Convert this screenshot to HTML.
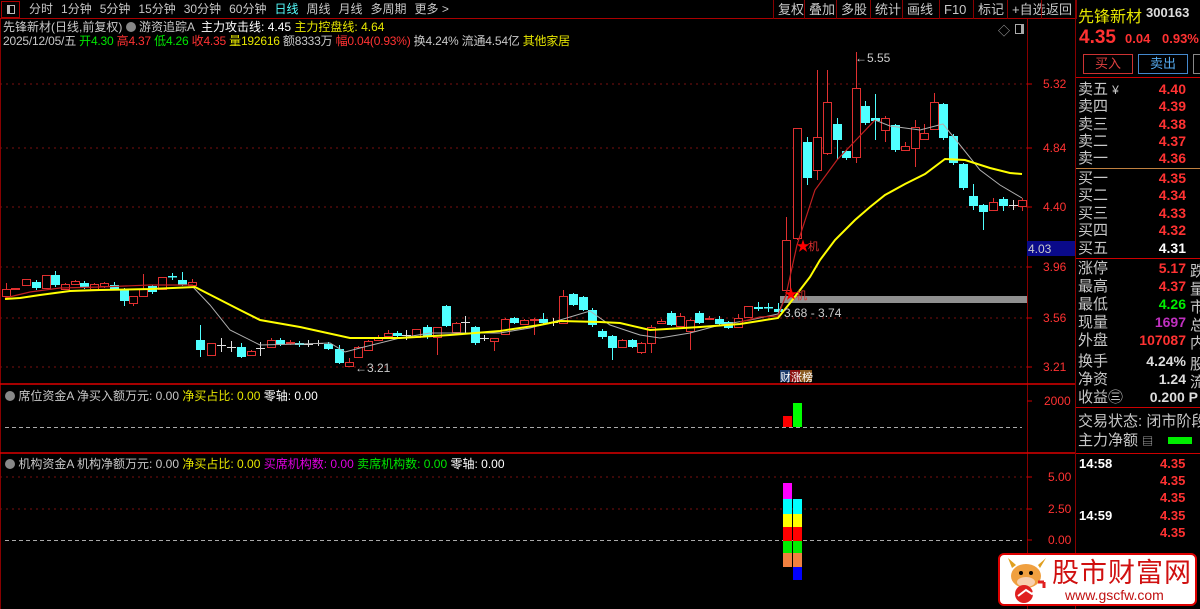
<!DOCTYPE html>
<html><head><meta charset="utf-8">
<style>
*{margin:0;padding:0;box-sizing:border-box}
body{width:1200px;height:609px;background:#000;overflow:hidden;position:relative;font-family:"Liberation Sans","Noto Sans CJK SC",sans-serif;color:#c8c8c8;font-size:12px}
.a{position:absolute;white-space:nowrap}
.menu span{margin-right:8px}
.btn{position:absolute;top:0;height:19px;border-left:1px solid #800;padding:0 4px;line-height:19px;font-size:13px;color:#c8c8c8}
.r{color:#ff3232}.g{color:#00e600}.y{color:#e6e600}.w{color:#fff}.m{color:#e000e0}
.lbl{position:absolute;left:1078px;font-size:15px;color:#c8c8c8;line-height:17px;white-space:nowrap}
.val{position:absolute;right:14px;font-size:14px;font-weight:bold;color:#ff3232;line-height:17px;text-align:right}
</style></head><body>
<!-- top bar -->
<div class="a" style="left:0;top:0;width:1075px;height:19px;border-bottom:1px solid #a00"></div>
<div class="a" style="left:1px;top:1px;width:19px;height:17px;border:1px solid #a00"></div>
<div class="a" style="left:7px;top:5px;width:8px;height:9px;border:1px solid #bbb;border-left-width:3px"></div>
<div class="a menu" style="left:29px;top:1px;font-size:12px;line-height:17px"><span>分时</span><span>1分钟</span><span>5分钟</span><span>15分钟</span><span>30分钟</span><span>60分钟</span><span style="color:#5ff">日线</span><span>周线</span><span>月线</span><span>多周期</span><span>更多 &gt;</span></div>
<div class="btn" style="left:773px">复权</div>
<div class="btn" style="left:804px">叠加</div>
<div class="btn" style="left:836px">多股</div>
<div class="btn" style="left:870px">统计</div>
<div class="btn" style="left:902px">画线</div>
<div class="btn" style="left:939px">F10</div>
<div class="btn" style="left:973px">标记</div>
<div class="btn" style="left:1007px">+自选</div>
<div class="btn" style="left:1041px;border-right:1px solid #800">返回</div>
<!-- info lines -->
<div class="a" style="left:3px;top:19px;font-size:12px;line-height:16px">先锋新材(日线,前复权) <span style="display:inline-block;width:10px;height:10px;border-radius:5px;background:#888;vertical-align:-1px"></span> 游资追踪A &nbsp;<span class="w">主力攻击线: 4.45</span> <span class="y">主力控盘线: 4.64</span></div>
<div class="a" style="left:3px;top:34px;font-size:12px;line-height:15px;letter-spacing:-0.2px">2025/12/05/五 <span class="g">开4.30</span> <span class="r">高4.37</span> <span class="g">低4.26</span> <span class="r">收4.35</span> <span class="y">量192616</span> 额8333万 <span class="r">幅0.04(0.93%)</span> 换4.24% 流通4.54亿 <span class="y">其他家居</span></div>
<div class="a" style="left:998px;top:22px;color:#aaa;font-size:12px">◇</div>
<div class="a" style="left:1015px;top:24px;width:9px;height:10px;border:1px solid #aaa;border-right-width:3px"></div>

<svg class="a" style="left:0;top:0" width="1200" height="609" id="sv">
<g stroke="#800" stroke-width="1">
<line x1="1027.5" y1="19" x2="1027.5" y2="609"/>
<line x1="1075.5" y1="0" x2="1075.5" y2="609"/>
<line x1="0.5" y1="19" x2="0.5" y2="609"/>
</g>
<g stroke="#d00" stroke-width="1.5">
<line x1="0" y1="384" x2="1075" y2="384"/>
<line x1="0" y1="453" x2="1075" y2="453"/>
</g>
<g stroke="#7a1010" stroke-dasharray="2,4">
<line x1="0" y1="84" x2="1027" y2="84"/><line x1="0" y1="148" x2="1027" y2="148"/>
<line x1="0" y1="207" x2="1027" y2="207"/><line x1="0" y1="267" x2="1027" y2="267"/>
<line x1="0" y1="318" x2="1027" y2="318"/><line x1="0" y1="367" x2="1027" y2="367"/>
<line x1="0" y1="477" x2="1027" y2="477"/><line x1="0" y1="509" x2="1027" y2="509"/>
</g>
<g stroke="#aaa" stroke-dasharray="4,3">
<line x1="5" y1="427.5" x2="1022" y2="427.5"/><line x1="5" y1="540.5" x2="1022" y2="540.5"/>
</g>
<g stroke="#c00" stroke-width="1"><line x1="1027" y1="84" x2="1032" y2="84"/><line x1="1027" y1="148" x2="1032" y2="148"/><line x1="1027" y1="207" x2="1032" y2="207"/><line x1="1027" y1="267" x2="1032" y2="267"/><line x1="1027" y1="318" x2="1032" y2="318"/><line x1="1027" y1="367" x2="1032" y2="367"/><line x1="1027" y1="401" x2="1032" y2="401"/><line x1="1027" y1="477" x2="1032" y2="477"/><line x1="1027" y1="509" x2="1032" y2="509"/><line x1="1027" y1="540" x2="1032" y2="540"/></g>
<rect x="780" y="296" width="247" height="7" fill="#909090"/>
<g id="cd"></g>
<polyline fill="none" stroke="#b0b0b0" stroke-width="1" points="193,287 210,305 230,330 260,345 300,344 330,343 345,352 360,348 400,338 430,333 470,333 500,333 530,328 560,320 590,311 610,325 640,335 660,338 690,333 720,325 750,320 778,314 786,295"/>
<polyline fill="none" stroke="#b0b0b0" stroke-width="1" points="875,120 890,126 920,130 943,124 960,145 980,170 1000,185 1022,198"/>
<polyline fill="none" stroke="#c02020" stroke-width="1.2" points="5,298 30,292 60,288 100,287 150,285 193,285"/>
<polyline fill="none" stroke="#c02020" stroke-width="1.2" points="740,322 760,317 778,316 786,295 797,245 815,190 837,160 856,140 875,120"/>
<polyline fill="none" stroke="#ffff00" stroke-width="2" points="5,299 20,298 40,295 70,291 100,290 150,289 195,287 240,310 260,320 300,327 350,338 400,338 450,335 500,331 540,325 560,321 600,322 620,323 650,330 700,327 740,324 778,318 790,303 800,290 810,277 820,260 835,240 855,220 870,207 885,195 905,184 925,174 945,159 965,160 990,168 1010,173 1022,174"/>
<text x="355" y="372" fill="#ccc" font-size="12" font-family="Liberation Sans">&#8592;3.21</text>
<text x="855" y="62" fill="#ccc" font-size="12" font-family="Liberation Sans">&#8592;5.55</text>
<text x="784" y="317" fill="#ccc" font-size="12" font-family="Liberation Sans">3.68 - 3.74</text>
<text x="796" y="251" fill="#f00" font-size="14">★</text><text x="808" y="250" fill="#e03030" font-size="11" font-family="Noto Sans CJK SC">机</text>
<text x="784" y="299" fill="#f00" font-size="14">★</text><text x="796" y="299" fill="#e03030" font-size="11" font-family="Noto Sans CJK SC">机</text>
<rect x="780" y="370" width="10" height="12" fill="#1a3a6a"/><rect x="790" y="370" width="10" height="12" fill="#8a1010"/><rect x="800" y="370" width="12" height="12" fill="#8a5a20"/>
<text x="780" y="381" fill="#fff" font-size="11" font-family="Noto Sans CJK SC">财涨榜</text>
<rect x="783" y="416" width="9" height="11" fill="#f00"/><rect x="793" y="403" width="9" height="24" fill="#0f0"/>
<g>
<rect x="783" y="483" width="9" height="16" fill="#f0f"/>
<rect x="783" y="499" width="9" height="15" fill="#0ff"/><rect x="793" y="499" width="9" height="15" fill="#0ff"/>
<rect x="783" y="514" width="9" height="13" fill="#ff0"/><rect x="793" y="514" width="9" height="13" fill="#ff0"/>
<rect x="783" y="527" width="9" height="14" fill="#f00"/><rect x="793" y="527" width="9" height="14" fill="#f00"/>
<rect x="783" y="541" width="9" height="12" fill="#0e0"/><rect x="793" y="541" width="9" height="12" fill="#0e0"/>
<rect x="783" y="553" width="9" height="14" fill="#f08040"/><rect x="793" y="553" width="9" height="14" fill="#f08040"/>
<rect x="793" y="567" width="9" height="13" fill="#00f"/>
</g>
<rect x="1027" y="241" width="48" height="15" fill="#0a0a8a"/>
<line x1="1076" y1="168.5" x2="1200" y2="168.5" stroke="#c08040"/>
<line x1="1076" y1="258.5" x2="1200" y2="258.5" stroke="#c00"/>
<line x1="1076" y1="407.5" x2="1200" y2="407.5" stroke="#c00"/>
<line x1="1076" y1="453.5" x2="1200" y2="453.5" stroke="#c00"/>
<line x1="1076" y1="77.5" x2="1200" y2="77.5" stroke="#c00"/>
</svg>
<!-- axis labels -->
<div class="a r" style="left:1043px;top:77px;font-size:12px">5.32</div>
<div class="a r" style="left:1043px;top:141px;font-size:12px">4.84</div>
<div class="a r" style="left:1043px;top:200px;font-size:12px">4.40</div>
<div class="a" style="left:1028px;top:242px;font-size:12px;color:#ccc">4.03</div>
<div class="a r" style="left:1043px;top:260px;font-size:12px">3.96</div>
<div class="a r" style="left:1043px;top:311px;font-size:12px">3.56</div>
<div class="a r" style="left:1043px;top:360px;font-size:12px">3.21</div>
<div class="a r" style="left:1044px;top:394px;font-size:12px">2000</div>
<div class="a r" style="left:1048px;top:470px;font-size:12px">5.00</div>
<div class="a r" style="left:1048px;top:502px;font-size:12px">2.50</div>
<div class="a r" style="left:1048px;top:533px;font-size:12px">0.00</div>
<!-- panel titles -->
<div class="a" style="left:5px;top:387px;font-size:12px"><span style="display:inline-block;width:10px;height:10px;border-radius:5px;background:#888;vertical-align:-1px"></span> 席位资金A 净买入额万元: 0.00 <span class="y">净买占比: 0.00</span> <span class="w">零轴: 0.00</span></div>
<div class="a" style="left:5px;top:455px;font-size:12px"><span style="display:inline-block;width:10px;height:10px;border-radius:5px;background:#888;vertical-align:-1px"></span> 机构资金A 机构净额万元: 0.00 <span class="y">净买占比: 0.00</span> <span class="m">买席机构数: 0.00</span> <span class="g">卖席机构数: 0.00</span> <span class="w">零轴: 0.00</span></div>
<!-- right panel -->
<div class="a y" style="left:1078px;top:3px;font-size:16px">先锋新材</div>
<div class="a w" style="left:1146px;top:5px;font-size:13px;font-weight:bold;color:#ddd">300163</div>
<div class="a r" style="left:1079px;top:27px;font-size:19px;font-weight:bold">4.35</div>
<div class="a r" style="left:1125px;top:31px;font-size:13px;font-weight:bold">0.04</div>
<div class="a r" style="left:1162px;top:31px;font-size:13px;font-weight:bold">0.93%</div>
<div class="a r" style="left:1083px;top:54px;width:50px;height:20px;border:1px solid #c33;text-align:center;line-height:18px;font-size:13px;color:#e04040">买入</div>
<div class="a" style="left:1138px;top:54px;width:50px;height:20px;border:1px solid #48c;text-align:center;line-height:18px;font-size:13px;color:#5ae">卖出</div>
<div class="a" style="left:1193px;top:54px;width:10px;height:20px;border:1px solid #888"></div>
<div class="lbl" style="top:81px">卖五 <span style="font-size:12px">¥</span></div><div class="val" style="top:81px">4.40</div>
<div class="lbl" style="top:98px">卖四</div><div class="val" style="top:98px">4.39</div>
<div class="lbl" style="top:116px">卖三</div><div class="val" style="top:116px">4.38</div>
<div class="lbl" style="top:133px">卖二</div><div class="val" style="top:133px">4.37</div>
<div class="lbl" style="top:150px">卖一</div><div class="val" style="top:150px">4.36</div>
<div class="lbl" style="top:170px">买一</div><div class="val" style="top:170px">4.35</div>
<div class="lbl" style="top:187px">买二</div><div class="val" style="top:187px">4.34</div>
<div class="lbl" style="top:205px">买三</div><div class="val" style="top:205px">4.33</div>
<div class="lbl" style="top:222px">买四</div><div class="val" style="top:222px">4.32</div>
<div class="lbl" style="top:240px">买五</div><div class="val" style="top:240px;color:#fff">4.31</div>
<div class="lbl" style="top:260px">涨停</div><div class="val" style="top:260px">5.17</div><div class="a" style="left:1190px;top:260px;font-size:15px">跌</div>
<div class="lbl" style="top:278px">最高</div><div class="val" style="top:278px">4.37</div><div class="a" style="left:1190px;top:278px;font-size:15px">量</div>
<div class="lbl" style="top:296px">最低</div><div class="val" style="top:296px;color:#0e0">4.26</div><div class="a" style="left:1190px;top:296px;font-size:15px">市</div>
<div class="lbl" style="top:314px">现量</div><div class="val" style="top:314px;color:#c030c0">1697</div><div class="a" style="left:1190px;top:314px;font-size:15px">总</div>
<div class="lbl" style="top:332px">外盘</div><div class="val" style="top:332px">107087</div><div class="a" style="left:1190px;top:332px;font-size:15px">内</div>
<div class="lbl" style="top:353px">换手</div><div class="val" style="top:353px;color:#ddd">4.24%</div><div class="a" style="left:1190px;top:353px;font-size:15px">股</div>
<div class="lbl" style="top:371px">净资</div><div class="val" style="top:371px;color:#ddd">1.24</div><div class="a" style="left:1190px;top:371px;font-size:15px">流</div>
<div class="lbl" style="top:389px">收益㊂</div><div class="val" style="top:389px;color:#ddd;right:2px">0.200 P</div>
<div class="lbl" style="top:413px">交易状态: 闭市阶段</div>
<div class="lbl" style="top:432px">主力净额 <span style="font-size:11px">▤</span></div>
<div class="a" style="left:1168px;top:437px;width:24px;height:7px;background:#0e0"></div>
<div class="a w" style="left:1079px;top:456px;font-size:13px;font-weight:bold">14:58</div>
<div class="a w" style="left:1079px;top:508px;font-size:13px;font-weight:bold">14:59</div>
<div class="a r" style="left:1160px;top:456px;font-size:13px;font-weight:bold">4.35</div>
<div class="a r" style="left:1160px;top:473px;font-size:13px;font-weight:bold">4.35</div>
<div class="a r" style="left:1160px;top:490px;font-size:13px;font-weight:bold">4.35</div>
<div class="a r" style="left:1160px;top:508px;font-size:13px;font-weight:bold">4.35</div>
<div class="a r" style="left:1160px;top:525px;font-size:13px;font-weight:bold">4.35</div>
<!-- watermark -->
<div class="a" style="left:998px;top:553px;width:199px;height:53px;background:#fff;border:2px solid #d00;border-radius:6px"></div>
<svg class="a" style="left:1002px;top:556px" width="50" height="48">
<path d="M10 12 L6 2 L14 9 Z M38 12 L44 2 L36 9 Z" fill="#e0a020"/>
<ellipse cx="24" cy="20" rx="15" ry="12" fill="#f0a040"/>
<ellipse cx="24" cy="26" rx="9" ry="5" fill="#f8d0b0"/>
<circle cx="19" cy="17" r="2" fill="#000"/><circle cx="29" cy="17" r="2" fill="#000"/>
<circle cx="22" cy="38" r="9" fill="#e02020"/>
<path d="M16 40 L24 34 L30 38 L42 26" stroke="#fff" stroke-width="2" fill="none"/>
<path d="M42 26 L36 26 M42 26 L42 32" stroke="#e02020" stroke-width="3" fill="none"/>
</svg>
<div class="a" style="left:1052px;top:555px;font-size:27px;color:#d01010;font-family:'Noto Sans CJK SC',sans-serif;line-height:32px;letter-spacing:1px">股市财富网</div>
<div class="a" style="left:1065px;top:587px;font-size:14px;color:#c01010;line-height:16px">www.gscfw.com</div>

<script>
var C=[
[6,289,296,283,298,'r'],[15,288,289,288,289,'r'],[26,279,285,279,285,'r'],[36,282,288,280,290,'c'],[46,275,288,275,288,'r'],[55,275,285,271,287,'c'],[65,284,289,283,290,'r'],[75,281,284,280,285,'r'],[84,283,287,281,289,'c'],[94,284,289,283,290,'r'],[104,283,286,282,288,'r'],[114,285,289,282,290,'c'],[124,290,301,288,306,'c'],[133,296,303,296,306,'r'],[143,289,296,274,296,'r'],[152,286,292,285,294,'c'],[162,277,289,277,290,'r'],[172,276,277,273,280,'c'],[182,280,285,272,286,'c'],[192,282,285,279,286,'r'],
[200,340,350,325,357,'c'],[211,343,355,343,356,'r'],[221,345,346,338,352,'w'],[231,347,348,341,352,'w'],[241,347,357,343,358,'c'],[251,351,355,350,356,'r'],[260,348,349,342,356,'w'],[271,340,347,338,348,'r'],[280,340,344,338,346,'c'],[290,342,343,340,345,'r'],[299,343,345,341,347,'c'],[308,344,345,340,347,'w'],[318,343,344,340,346,'w'],[328,344,349,342,350,'c'],[339,349,363,345,364,'c'],[349,362,366,358,367,'r'],[358,347,357,346,358,'r'],[368,341,350,340,351,'r'],[378,337,340,335,341,'r'],[388,333,336,330,337,'r'],[397,333,336,331,338,'c'],
[406,335,336,330,340,'w'],[416,329,337,329,338,'r'],[427,327,337,325,339,'c'],[437,327,337,327,355,'r'],[446,306,326,305,327,'c'],[456,323,332,322,333,'r'],[465,322,323,316,333,'w'],[475,327,343,326,345,'c'],[484,338,339,335,341,'w'],[494,338,341,338,351,'r'],[505,319,334,318,335,'r'],[514,318,323,317,324,'c'],[524,320,324,319,325,'r'],[534,319,320,318,335,'r'],[543,319,323,313,324,'c'],[553,322,323,318,326,'w'],[563,296,323,290,323,'r'],[573,294,305,293,306,'c'],[583,297,310,296,311,'c'],[592,310,325,308,327,'c'],[602,331,337,329,339,'c'],[612,336,348,335,360,'c'],[622,340,347,339,348,'r'],[632,340,347,339,348,'c'],[641,343,352,342,354,'r'],[651,327,343,325,353,'r'],[661,321,323,319,324,'r'],[671,313,325,311,326,'c'],[680,316,326,313,327,'r'],[690,320,331,319,350,'r'],[699,313,323,311,324,'c'],[709,318,319,316,320,'r'],[719,319,324,316,326,'c'],[728,322,328,321,329,'c'],[738,318,327,314,328,'r'],[748,306,317,306,318,'r'],[758,307,309,302,311,'c'],[768,307,308,303,312,'c'],[778,309,312,303,313,'c'],
[786,240,290,217,292,'r'],[797,128,238,128,240,'r'],[807,142,178,137,185,'c'],[817,137,170,70,180,'r'],[827,102,153,70,155,'r'],[837,124,140,118,160,'c'],[846,151,158,150,160,'c'],[856,88,157,52,163,'r'],[865,106,123,101,125,'c'],[875,118,121,94,140,'c'],[885,118,130,116,142,'r'],[895,125,150,124,152,'c'],[905,146,150,142,151,'r'],[915,127,148,120,167,'r'],[924,133,139,124,140,'r'],[934,102,129,93,130,'r'],[943,104,138,103,140,'c'],[953,136,163,134,165,'c'],[963,164,188,163,190,'c'],[973,196,206,184,210,'c'],[983,205,212,204,230,'c'],[993,202,210,198,211,'r'],[1003,199,206,197,211,'c'],[1013,205,206,200,210,'w'],[1022,200,206,198,211,'r']];
var g=document.getElementById('cd'),s='';
C.forEach(function(c){var x=c[0],t=Math.min(c[1],c[2]),b=Math.max(c[1],c[2]),col=c[5]=='r'?'#e03030':c[5]=='c'?'#50ffff':'#e0e0e0';
s+='<line x1="'+(x+.5)+'" y1="'+c[3]+'" x2="'+(x+.5)+'" y2="'+c[4]+'" stroke="'+col+'"/>';
if(c[5]=='r')s+='<rect x="'+(x-3.5)+'" y="'+(t+.5)+'" width="8" height="'+Math.max(b-t,1)+'" fill="#000" stroke="'+col+'"/>';
else if(c[5]=='c')s+='<rect x="'+(x-4)+'" y="'+t+'" width="9" height="'+Math.max(b-t,1.5)+'" fill="'+col+'"/>';
else s+='<line x1="'+(x-4)+'" y1="'+(t+.5)+'" x2="'+(x+5)+'" y2="'+(t+.5)+'" stroke="'+col+'"/>';});
g.innerHTML=s;
</script>
</body></html>
